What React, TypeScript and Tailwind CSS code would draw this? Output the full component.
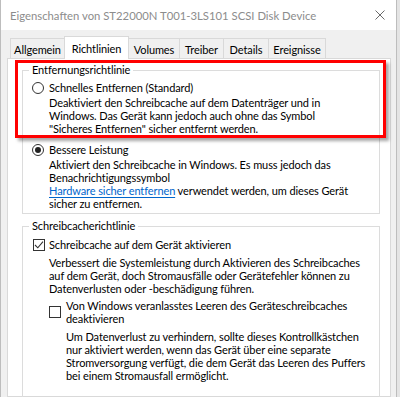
const font = { fontFamily: 'Lato, "Liberation Sans", Arial, sans-serif' };

function Radio({ checked }: { checked?: boolean }) {
  return (
    <span className="flex h-[12px] w-[12px] shrink-0 items-center justify-center rounded-full border border-[#333] bg-white">
      {checked && <span className="h-[6px] w-[6px] rounded-full bg-[#222]" />}
    </span>
  );
}

function Checkbox({ checked }: { checked?: boolean }) {
  return (
    <span className="flex h-[12px] w-[12px] shrink-0 items-center justify-center border border-[#333] bg-white">
      {checked && (
        <svg width="10" height="10" viewBox="0 0 10 10">
          <path d="M1 5 L3.8 7.8 L9 1.6" fill="none" stroke="#333" strokeWidth="1.1" />
        </svg>
      )}
    </span>
  );
}

const tabs = [
  { label: "Allgemein", w: "w-[54px]" },
  { label: "Richtlinien", w: "w-[65px]" },
  { label: "Volumes", w: "w-[50px]" },
  { label: "Treiber", w: "w-[44px]" },
  { label: "Details", w: "w-[45px]" },
  { label: "Ereignisse", w: "w-[58px]" },
];

export default function App() {
  return (
    <div
      className="relative h-[397px] w-[400px] overflow-hidden whitespace-nowrap bg-[#e4e4e4] text-[11px] leading-[13px] tracking-[-0.1px] text-black"
      style={font}
    >
      <div className="flex h-full w-[397px] flex-col border-l border-r border-[#bdbdbd] bg-[#f0f0f0]">
        {/* title bar */}
        <div className="flex h-[30px] shrink-0 items-center justify-between bg-white pl-[9px] pr-[11px]">
          <span className="text-[11.3px] tracking-normal text-[#8c8c8c]">
            Eigenschaften von ST22000N T001-3LS101 SCSI Disk Device
          </span>
          <svg width="10" height="10" viewBox="0 0 10 10">
            <path d="M0.5 0.5 L9.5 9.5 M9.5 0.5 L0.5 9.5" stroke="#6a6a6a" strokeWidth="1" />
          </svg>
        </div>

        <div className="flex min-h-0 flex-1 flex-col pl-[6px] pr-[5px] pt-[6px]">
          {/* tabs */}
          <div className="relative z-10 flex h-[22px] shrink-0 items-end pl-[3px]">
            {tabs.map((t, i) =>
              i === 1 ? (
                <div
                  key={t.label}
                  className={`${t.w} -mb-px flex h-[23px] justify-center border border-b-0 border-[#d9d9d9] bg-white pt-[5px]`}
                >
                  {t.label}
                </div>
              ) : (
                <div
                  key={t.label}
                  className={`${t.w} flex h-[20px] justify-center border-t border-[#d9d9d9] bg-[#f0f0f0] pt-[4px] ${i === 0 ? "border-l" : ""} ${i > 2 ? "border-l" : ""} ${i === 5 ? "border-r" : ""}`}
                >
                  {t.label}
                </div>
              )
            )}
          </div>

          {/* panel */}
          <div className="min-h-0 flex-1 border border-[#d9d9d9] bg-white pl-[14px] pr-[10px] pt-[4px]">
            <fieldset className="border border-[#dcdcdc] p-0">
              <legend className="ml-[6px] px-[3px] leading-[14px]">Entfernungsrichtlinie</legend>
              <div className="pb-[3px] pl-[9px]">
                <div className="mt-[4px] flex items-center gap-[5px]">
                  <Radio />
                  <span>Schnelles Entfernen (Standard)</span>
                </div>
                <p className="mt-[2px] pl-[17px]">
                  Deaktiviert den Schreibcache auf dem Datenträger und in
                  <br />
                  Windows. Das Gerät kann jedoch auch ohne das Symbol
                  <br />
                  "Sicheres Entfernen" sicher entfernt werden.
                </p>
                <div className="mt-[8px] flex items-center gap-[5px]">
                  <Radio checked />
                  <span>Bessere Leistung</span>
                </div>
                <p className="mt-[2px] pl-[17px]">
                  Aktiviert den Schreibcache in Windows. Es muss jedoch das
                  <br />
                  Benachrichtigungssymbol
                  <br />
                  <a className="text-[#0066cc] underline underline-offset-[2px]">Hardware sicher entfernen</a> verwendet
                  werden, um dieses Gerät
                  <br />
                  sicher zu entfernen.
                </p>
              </div>
            </fieldset>

            <fieldset className="mt-[5px] border border-b-0 border-[#dcdcdc] p-0">
              <legend className="ml-[6px] px-[3px] leading-[14px]">Schreibcacherichtlinie</legend>
              <div className="pb-[30px] pl-[10px]">
                <div className="mt-[5px] flex items-center gap-[4px]">
                  <Checkbox checked />
                  <span>Schreibcache auf dem Gerät aktivieren</span>
                </div>
                <p className="mt-[5px] pl-[16px]">
                  Verbessert die Systemleistung durch Aktivieren des Schreibcaches
                  <br />
                  auf dem Gerät, doch Stromausfälle oder Gerätefehler können zu
                  <br />
                  Datenverlusten oder -beschädigung führen.
                </p>
                <div className="mt-[4px] flex items-center gap-[5px] pl-[16px]">
                  <Checkbox />
                  <span>
                    Von Windows veranlasstes Leeren des Geräteschreibcaches
                    <br />
                    deaktivieren
                  </span>
                </div>
                <p className="mt-[5px] pl-[33px]">
                  Um Datenverlust zu verhindern, sollte dieses Kontrollkästchen
                  <br />
                  nur aktiviert werden, wenn das Gerät über eine separate
                  <br />
                  Stromversorgung verfügt, die dem Gerät das Leeren des Puffers
                  <br />
                  bei einem Stromausfall ermöglicht.
                </p>
              </div>
            </fieldset>
          </div>
        </div>
      </div>

      {/* red annotation frame */}
      <div className="absolute left-[15px] top-[60px] h-[78px] w-[371px] border-[3px] border-[#ff0000] shadow-[3px_3px_3px_rgba(0,0,0,0.35)]" />
    </div>
  );
}
